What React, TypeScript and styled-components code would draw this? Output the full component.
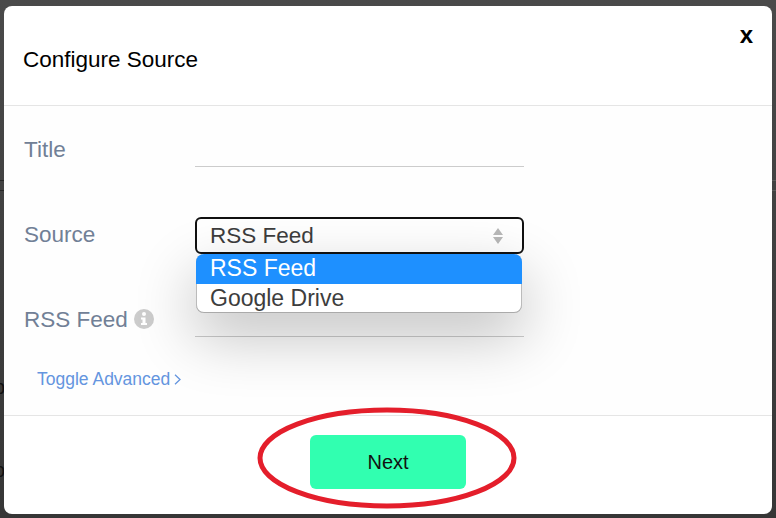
import React from "react";
import styled, { createGlobalStyle } from "styled-components";

const Global = createGlobalStyle`
  html, body { margin: 0; padding: 0; width: 776px; height: 518px; overflow: hidden; background: #3f3f3f; }
  * { box-sizing: border-box; }
  #root { width: 776px; height: 518px; font-family: "Liberation Sans", Arial, sans-serif; }
`;

const Backdrop = styled.div`
  width: 776px;
  height: 518px;
  padding: 6px 4px 4px;
  background: linear-gradient(#4a4a4a 0, #414141 40%, #363636 100%);
  position: relative;
  overflow: hidden;
`;

const Modal = styled.div`
  width: 768px;
  height: 508px;
  background: #fff;
  border-radius: 8px;
  display: flex;
  flex-direction: column;
  position: relative;
  z-index: 1;
`;

const Header = styled.header`
  height: 100px;
  border-bottom: 1px solid #e5e5e5;
  padding: 41px 19px 0;
  display: flex;
  justify-content: space-between;
  align-items: flex-start;
`;

const Heading = styled.h2`
  margin: 0;
  font-size: 22.5px;
  line-height: 26px;
  font-weight: 400;
  color: #000;
`;

const Close = styled.button`
  border: 0;
  padding: 0;
  background: none;
  font: 700 24px/24px "Liberation Sans", Arial, sans-serif;
  color: #000;
  margin: -24px 0 0;
`;

const Body = styled.div`
  flex: 1;
  padding: 30px 20px 0;
  display: flex;
  flex-direction: column;
  background: #fefefe;
  overflow: hidden;
`;

const Row = styled.div`
  display: grid;
  grid-template-columns: 171px 329px;
  height: 85px;
`;

const Label = styled.label`
  font-size: 22.5px;
  line-height: 28px;
  color: #718096;
  display: flex;
  align-items: flex-start;
  gap: 6px;
`;

const Info = styled.svg`
  width: 20px;
  height: 20px;
  margin-top: 3px;
`;

const Underline = styled.div`
  height: 31px;
  border-bottom: 1px solid #ccc;
`;

const SelectWrap = styled.div`
  position: relative;
  height: 32px;
  margin-top: -4px;
`;

const SelectBox = styled.div`
  height: 37px;
  border: 2px solid #111;
  border-radius: 6px;
  background: #fff;
  padding: 0 13px;
  display: flex;
  align-items: center;
  justify-content: space-between;
  font-size: 22.5px;
  color: #3d3d3d;
`;

const Arrows = styled.svg`
  width: 12px;
  height: 18px;
  margin-right: 5px;
`;

const Menu = styled.ul`
  position: absolute;
  left: 1px;
  right: 2px;
  top: 37px;
  margin: 0;
  padding: 0;
  list-style: none;
  background: #fff;
  border-radius: 8px;
  overflow: hidden;
  box-shadow: inset 0 -1px 0 #aaa, inset -1px 0 0 #bbb, inset 1px 0 0 #bbb, 0 22px 60px 2px rgba(0, 0, 0, 0.24);
  z-index: 2;
`;

const Option = styled.li<{ $active?: boolean }>`
  height: 29.5px;
  line-height: 28px;
  padding-left: 14px;
  font-size: 23px;
  background: ${(p) => (p.$active ? "#1e90ff" : "transparent")};
  color: ${(p) => (p.$active ? "#fff" : "#3d3d3d")};
`;

const Toggle = styled.a`
  font-size: 17.5px;
  line-height: 22px;
  color: #6495df;
  margin: -23px 0 0 13px;
  display: flex;
  align-items: center;
  gap: 4px;
`;

const Chevron = styled.svg`
  width: 7px;
  height: 11px;
`;

const Footer = styled.footer`
  height: 99px;
  border-top: 1px solid #e5e5e5;
  display: flex;
  justify-content: center;
  padding-top: 19px;
`;

const NextButton = styled.button`
  width: 156px;
  height: 54px;
  border: 0;
  border-radius: 6px;
  background: #31ffb0;
  color: #111;
  font: 400 20px "Liberation Sans", Arial, sans-serif;
`;

const Annotation = styled.svg`
  position: absolute;
  left: 254px;
  top: 404px;
  width: 268px;
  height: 108px;
  z-index: 3;
  pointer-events: none;
`;

const Peek = styled.span<{ $top: number }>`
  position: absolute;
  left: -6px;
  top: ${(p) => p.$top}px;
  font-size: 20px;
  line-height: 20px;
  color: #111;
`;

const GhostEdge = styled.div<{ $side: "left" | "right" }>`
  position: absolute;
  top: 180px;
  ${(p) => p.$side}: -4px;
  width: 10px;
  height: 11px;
  border: 1px solid ${(p) => (p.$side === "left" ? "#262626" : "#5a5a5a")};
`;

export default function App() {
  return (
    <>
      <Global />
      <Backdrop>
        <GhostEdge $side="left" />
        <GhostEdge $side="right" />
        <Peek $top={377}>p</Peek>
        <Peek $top={460}>o</Peek>
        <Modal>
          <Header>
            <Heading>Configure Source</Heading>
            <Close>x</Close>
          </Header>
          <Body>
            <Row>
              <Label>Title</Label>
              <Underline />
            </Row>
            <Row>
              <Label>Source</Label>
              <SelectWrap>
                <SelectBox>
                  RSS Feed
                  <Arrows viewBox="0 0 12 18">
                    <path d="M6 1 L11 8 H1 Z M1 10 H11 L6 17 Z" fill="#b8b8b8" />
                  </Arrows>
                </SelectBox>
                <Menu>
                  <Option $active>RSS Feed</Option>
                  <Option>Google Drive</Option>
                </Menu>
              </SelectWrap>
            </Row>
            <Row>
              <Label>
                RSS Feed
                <Info viewBox="0 0 20 20">
                  <circle cx="10" cy="10" r="10" fill="#ccc" />
                  <circle cx="10" cy="5" r="2" fill="#fff" />
                  <path d="M7 8.5 H11.5 V14 H13 V16 H7 V14 H8.5 V10.5 H7 Z" fill="#fff" />
                </Info>
              </Label>
              <Underline />
            </Row>
            <Toggle>
              Toggle Advanced
              <Chevron viewBox="0 0 7 11">
                <path d="M1 0.8 L6 5.5 L1 10.2" fill="none" stroke="#6495df" strokeWidth="1.3" />
              </Chevron>
            </Toggle>
          </Body>
          <Footer>
            <NextButton>Next</NextButton>
          </Footer>
        </Modal>
        <Annotation viewBox="0 0 268 108">
          <ellipse cx="133" cy="54" rx="127" ry="48" fill="none" stroke="#e41e2b" strokeWidth="5" />
        </Annotation>
      </Backdrop>
    </>
  );
}
